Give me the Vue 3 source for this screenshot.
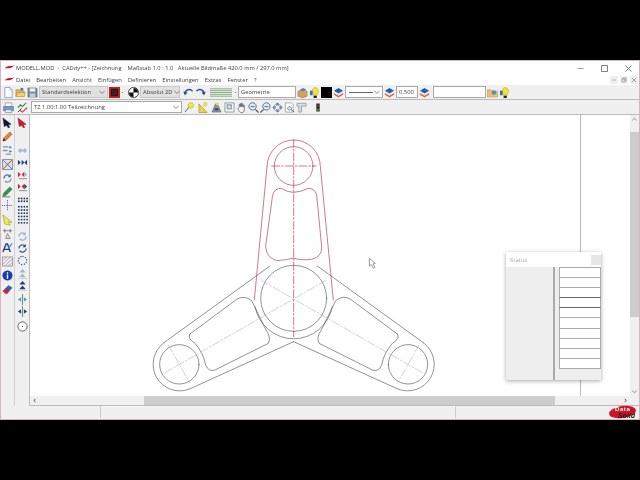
<script setup>
import { h } from 'vue'

const N = 'none'
const layer = [['M6 1 11 4 6 7 1 4z', '#1f5fb4', N, 0], ['M1 6.5 6 9.5 11 6.5V8.5L6 11.5 1 8.5z', '#d9683a', N, 0]]
const dots = (rows) => rows.flatMap(([y, c]) => [2, 5, 8, 11].map((x) => [`M${x - 1} ${y}a1 1 0 1 0 2 0a1 1 0 1 0 -2 0`, c, N, 0]))
const icons = {
  file: [['M2 .5h5.5L10 3v8.5H2z', '#fff', '#6f8fb5', .8], ['M7.5 .5V3H10', '#dce6f2', '#6f8fb5', .6]],
  open: [['M1 3h4l1 1.5h4V10H1z', '#e7b34a', '#a87c28', .6], ['M6 1h3v3L6 4z', '#3a78c8', N, 0], ['M3 6h8.5L10 10.5H1z', '#f3cf74', '#a87c28', .5]],
  save: [['M1 1h9l1 1v9H1z', '#7d8a99', '#56616e', .6], ['M3 1.5h6v3.5H3z', '#eef2f6', N, 0], ['M3 7h6v4H3z', '#c7ced6', N, 0]],
  redbox: [['M0 0h12v12H0z', '#c9201f', N, 0], ['M2.5 2.5h7v7h-7z', '#3a2020', '#111', 1]],
  ball: [['M6 .5a5.5 5.5 0 1 0 .01 0z', '#fff', '#333', 1], ['M6 1a5 5 0 0 1 5 5H6zM6 6v5a5 5 0 0 1-5-5z', '#111', N, 0]],
  undo: [['M2 8C2 3 7 1 10.500 4.500', N, '#24508f', 1.5], ['M.3 5 2 9 5 6', '#24508f', N, 0]],
  redo: [['M10 8C10 3 5 1 1.500 4.500', N, '#24508f', 1.5], ['M11.700 5 10 9 7 6', '#24508f', N, 0]],
  lines: [['M0 2h24M0 4h24M0 6h24M0 8h24M0 10h24', N, '#5f9a58', .8]],
  boxes: [['M1 5l5-3 5 3v5l-5 2-5-2z', '#d9a05a', '#8c5f2c', .5], ['M3 3l4-2 3 2-4 2z', '#4a86c8', N, 0]],
  bulb: [['M6.500 .5a4 4 0 0 1 2.500 7v1.500H5V7.500A4 4 0 0 1 6.500 .5z', '#f2e52e', '#a89c10', .5], ['M5 9.500h3.500V12H5z', '#222', N, 0], ['M1 4h3v5H1z', '#2f78a8', N, 0]],
  folderp: [['M.5 3h4l1 1.500h6V11H.5z', '#eec06e', '#b38a3e', .5], ['M5 6a2.500 2.500 0 1 0 5 0a2.500 2.500 0 1 0-5 0z', '#4d94c8', N, 0]],
  layer,
  printer: [['M2.500 1h7v4h-7z', '#fff', '#667', .6], ['M.5 5h11v4.500H.5z', '#6f9fd0', '#3e6a98', .6], ['M2.500 8.500h7v3h-7z', '#eef', '#667', .6]],
  tick: [['M1 11 5 7', N, '#333', 1], ['M1 6 4 3 6 5 10 1', N, '#2c8a3a', 1.200], ['M3 9l3 2 5-5', N, '#c83a3a', 1.200]],
  ywand: [['M1 11 6 5', N, '#555', 1], ['M7.500 .8a3 3 0 1 1-.01 0z', '#f2ea3a', '#9a9420', .5]],
  ytri: [['M1 11.500V2l9 9.500z', '#f0da4a', '#9a8a20', .7], ['M3.200 9.500V6.500l3 3z', '#fff', '#9a8a20', .4], ['M8 .5a2 2 0 1 1-.01 0z', '#f2ea3a', '#a09a20', .4]],
  tool: [['M1 11 5 2 8 4 11 11z', '#8a96a4', '#4e5864', .6], ['M4 7h4v2H4z', '#2f3a46', N, 0], ['M7 .5a1.700 1.700 0 1 1-.01 0z', '#e8e040', N, 0]],
  zoombox: [['M1 1h10v10H1z', '#eef1f4', '#7b8794', .8], ['M3.500 3h4.500v4.500H3.500z', '#d4dde6', '#55616e', .7]],
  hand: [['M3.500 6V2.500h1V5h.5V1.500h1V5h.5V2h1v3.500h.5V3.500h1V9c0 1.500-1 2.500-2.500 2.500H6C4.500 11.500 3 10 2 7.500z', '#f7f7f7', '#3a4654', .7]],
  zin: [['M5 .8a4 4 0 1 1-.01 0z', '#dfe7ef', '#4a6a8c', 1], ['M8 8l3.500 3.500', N, '#4a5a6a', 1.400], ['M3 5h4', N, '#2d68a8', 1]],
  zout: [['M7 .8a4 4 0 1 0 .01 0z', '#dfe7ef', '#4a6a8c', 1], ['M4 8 .5 11.500', N, '#4a5a6a', 1.400], ['M5 5h4', N, '#2d68a8', 1]],
  zall: [['M6 .5 9 3H3zM6 11.500 3 9h6zM.5 6 3 3v6zM11.500 6 9 9V3z', '#5f7f9f', N, 0], ['M6 3.500a2.500 2.500 0 1 1-.01 0z', '#eef', '#4a6a8c', .7]],
  zpage: [['M1.500 1h6.500L10 3v8H1.500z', '#fff', '#7b8794', .7], ['M6 5a2 2 0 1 1-.01 0z', '#dfe7ef', '#4a6a8c', .8], ['M7.500 8 11 11', N, '#4a5a6a', 1]],
  ruler: [['M1 1.500h10v3H6v6.500H3V4.500H1z', '#d8dde2', '#7b8794', .7]],
  traffic: [['M3.500 0h5v12h-5z', '#2a2a2a', N, 0], ['M6 2a1.300 1.300 0 1 1-.01 0z', '#b3271f', N, 0], ['M6 8a1.300 1.300 0 1 1-.01 0z', '#3fc23a', N, 0]],
  cblack: [['M1 1 10 8 7 8.500 8.500 11.500 6.500 11.500 5 9 2.500 10.500z', '#111827', '#0f2a5c', .5]],
  cred: [['M1 1 10 8 7 8.500 8.500 11.500 6.500 11.500 5 9 2.500 10.500z', '#c81e28', '#7a1a28', .5]],
  pencil: [['M1 11 2 7.500 8.500 1 11 3.500 4.500 10z', '#e8842c', '#8f4a14', .6], ['M1 11 2 8 4 10z', '#222', N, 0]],
  ends: [['M1 2h6M1 6h5M4 10h6', N, '#8a949e', 1.400], ['M8 1l3 1.500-3 1.500z', '#3b78c0', N, 0], ['M8 5.500l3 1.500-3 1.500z', '#3b78c0', N, 0]],
  cross: [['M.5 .5h11v11H.5z', '#dbe4ee', '#5e7690', .8], ['M1 11 11 1', N, '#d9762a', 1.400], ['M1 1l10 10', N, '#3b78c0', 1]],
  spin: [['M2 6a4 4 0 0 1 7-2.500', N, '#4b6f9c', 1.400], ['M10 6a4 4 0 0 1-7 2.500', N, '#7f97b5', 1.400], ['M9.500 1v3.500H6z', '#4b6f9c', N, 0]],
  gpen: [['M1 11 2 7.500 8.500 1 11 3.500 4.500 10z', '#2c9a4a', '#17652e', .6], ['M0 11.800h9', N, '#333', .7]],
  dotcross: [['M6 0v12M0 6h12', N, '#2a4fb8', 1, '1 1']],
  yarrow: [['M1 1 11 9 7 9 9 12 3 11z', '#ecec4e', '#8a8a20', .6]],
  dim: [['M1 3h10M3 1v4M9 1v4', N, '#555', .7], ['M4 11.500 6 6 9 11.500z', '#ddd', '#555', .6]],
  apen: [['M1 11 4.500 2h1.500L9 11M2.500 8h5', N, '#1d3b80', 1.500], ['M7 7 11 1.500', N, '#3f9fd0', 1.600]],
  hatch: [['M.5 1h11v10H.5z', '#eee', '#777', .7], ['M1 5 5 1M1 9l8-8M3 11l8-8M7 11l4-4', N, '#8e7fa0', .7]],
  info: [['M6 .5a5.500 5.500 0 1 1-.01 0z', '#1539b8', N, 0], ['M6 2.500v1.500M6 5v4.500', N, '#fff', 1.500]],
  eraser: [['M1 8 7 1.500 11 4 5 11z', '#2c62b8', '#333', .4], ['M1 8 4 4.800 8 7.500 5 11z', '#d6212f', N, 0]],
  pale: [['M1 6 4 3v2h4V3l3 3-3 3V7H4v2z', '#9fb6d2', N, 0]],
  dark: [['M1 3l3 3-3 3zM5 3l3 3-3 3z', '#1f4278', N, 0], ['M11 3 8 6l3 3z', '#1f4278', N, 0]],
  redblue: [['M1 3 4 6 1 9zM5 6l3-3v6z', '#cf2530', N, 0], ['M8 3l3 3-3 3z', '#a3b7d0', N, 0], ['M2 10.500h9', N, '#999', 1.200]],
  reddark: [['M1 3 4 6 1 9zM5 6l3-3v6z', '#cf2530', N, 0], ['M8 3l3 3-3 3z', '#1f4278', N, 0], ['M2 10.500h9', N, '#999', 1.200]],
  d2: dots([[6, '#2a3a55'], [9, '#2a3a55']]),
  d4: dots([1.5, 5, 8.5, 12, 15.5, 19].map((y) => [y, '#243c6e'])),
  spinp: [['M2 6a4 4 0 0 1 7-2.500M10 6a4 4 0 0 1-7 2.500', N, '#98b0cc', 1.500], ['M9.500 1v3.500H6z', '#98b0cc', N, 0]],
  spind: [['M2 6a4 4 0 0 1 7-2.500M10 6a4 4 0 0 1-7 2.500', N, '#3c6494', 1.500], ['M9.500 1v3.500H6z', '#1f4278', N, 0]],
  ring: [['M6 1.500a4.500 4.500 0 1 1-.01 0z', N, '#3a5a8a', 1.400, '1.300 1.500']],
  upp: [['M6 1 9.500 5H2.500zM6 6 9.500 10H2.500z', '#9fb6d2', N, 0], ['M1 11.500h10', N, '#ccc', .8]],
  upd: [['M6 1 9.500 5H2.500zM6 6 9.500 10H2.500z', '#1f4278', N, 0], ['M1 11.500h10', N, '#ccc', .8]],
  mirp: [['M6 0v12', N, '#3a9a4a', 1], ['M1 6 4.500 3.500v5zM11 6 7.500 3.500v5z', '#6d92bb', N, 0]],
  mird: [['M6 0v12', N, '#3a9a4a', 1], ['M1 6 4.500 3.500v5zM11 6 7.500 3.500v5z', '#1f4278', N, 0]],
  circle: [['M6 1a5 5 0 1 1-.01 0z', '#fff', '#444', .9], ['M5.500 5.500h1v1h-1z', '#444', N, 0]],
  chev: [['M2 4.500 6 8 10 4.500', N, '#555', 1]],
  drop: [['M3 5h6L6 8z', '#222', N, 0]],
  logo: [['M1 6c1-2.500 4-3.500 7-3 2 .2 3-.5 4-1.500-.5 2.500-2.500 3.500-4.500 3.800-2 .4-4 .2-6.500.7z', '#d4152a', N, 0]],
  wx: [['M2 2 10 10M10 2 2 10', N, '#555', 1]],
  wmin: [['M2 6h8', N, '#777', 1]],
  wmax: [['M2 2h8v8H2z', N, '#555', 1]],
  wres: [['M2 4h6v6H2zM4 4V2h6v6H8', N, '#666', 1]]
}

const Ico = (props) =>
  h('svg', { viewBox: props.box || '0 0 12 12', class: 'ic', style: props.w ? { width: props.w + 'px' } : null },
    icons[props.name].map(([d, fill, stroke, sw, dash]) => h('path', { d, fill, stroke, 'stroke-width': sw, 'stroke-dasharray': dash })))
Ico.props = ['name', 'box', 'w']

const menus = ['Datei', 'Bearbeiten', 'Ansicht', 'Einfügen', 'Definieren', 'Einstellungen', 'Extras', 'Fenster', '?']
const zoomIcons = ['zoombox', 'hand', 'zin', 'zout', 'zall', 'zpage', 'ruler']
const col1 = ['ends', 'cross', 'spin', 'gpen', 'dotcross', 'yarrow', 'dim', 'apen', 'hatch', 'info', 'eraser']
const col2 = [
  { n: 'pale' }, { n: 'dark' }, { n: 'redblue' }, { n: 'reddark' }, { n: 'd2' },
  { n: 'd4', c: 'tall', b: '0 0 12 21' },
  { n: 'spinp', c: 'sp4' }, { n: 'spind' }, { n: 'ring' },
  { n: 'upp', c: 'sp1' }, { n: 'upd' },
  { n: 'mirp', c: 'sp2' }, { n: 'mird' },
  { n: 'circle', c: 'sp3' }
]
const rows = ['#aaa', '#aaa', '#aaa', '#666', '#666', '#aaa', '#aaa', '#aaa', '#aaa', '#aaa']

const armPath = 'M72 638L390 408M72 638A80 80 0 0 0 151 776L461 635'
const pocket = 'M150 612L290 508Q312 494 335 512L378 600Q394 622 385 640L225 720Q205 726 197 705Q190 668 165 640Q140 625 150 612Z'
const sides = ['', 'translate(922 0) scale(-1 1)']
const topPocket = 'M398 195Q404 174 424 175Q445 188 461 187Q480 187 505 175Q525 175 530 195L545 350Q547 380 515 388Q480 392 461 384Q440 390 410 392Q378 382 377 350Z'
</script>

<template>
  <div class="screen">
    <div class="window">
      <header class="title">
        <Ico name="logo" class="logo" />
        <span class="title-text">MODELL.MOD &nbsp;-&nbsp; CADdy++ - [Zeichnung &nbsp;&nbsp; Maßstab 1.0 : 1.0 &nbsp; Aktuelle Bildmaße 420.0 mm / 297.0 mm]</span>
        <div class="wctl">
          <Ico name="wmin" /><Ico name="wmax" /><Ico name="wx" />
        </div>
      </header>
      <nav class="menu">
        <Ico name="logo" class="logo" />
        <span v-for="m in menus" :key="m" class="mi">{{ m }}</span>
        <div class="mdi">
          <span class="b"><Ico name="wmin" /></span><span class="b"><Ico name="wres" /></span><span class="b"><Ico name="wx" /></span>
        </div>
      </nav>
      <div class="bar bar1">
        <Ico name="file" /><Ico name="open" /><Ico name="save" />
        <div class="combo gray c-sel"><span>Standardselektion</span><Ico name="chev" /></div>
        <Ico name="redbox" /><Ico name="drop" class="drop" />
        <Ico name="ball" class="ml3" />
        <div class="combo gray c-abs"><span>Absolut 2D</span><Ico name="chev" /></div>
        <Ico name="undo" class="ml2" /><Ico name="redo" />
        <Ico name="lines" box="0 0 24 12" :w="24" class="ml2" /><Ico name="drop" class="drop" />
        <div class="combo c-geo"><span>Geometrie</span></div>
        <Ico name="boxes" /><Ico name="bulb" />
        <i class="swatch"></i>
        <Ico name="layer" />
        <div class="combo c-line"><i class="lineprev"></i><Ico name="chev" /></div>
        <Ico name="layer" />
        <div class="combo c-num"><span>0.500</span></div>
        <Ico name="layer" />
        <div class="combo c-empty"></div>
        <Ico name="folderp" /><Ico name="bulb" />
      </div>
      <div class="bar bar2">
        <Ico name="printer" /><Ico name="tick" class="ml2" />
        <div class="combo c-tz"><span>TZ 1.00:1.00 Teilzeichnung</span><Ico name="chev" /></div>
        <Ico name="ywand" class="ml1" /><Ico name="ytri" class="ml2" /><Ico name="tool" class="ml1" />
        <Ico v-for="(z, i) in zoomIcons" :key="z" :name="z" :class="{ ml1: i === 0 }" />
        <Ico name="traffic" class="ml5" />
      </div>
      <div class="main">
        <aside class="tools t1">
          <Ico name="cblack" />
          <Ico name="pencil" />
          <Ico v-for="c in col1" :key="c" :name="c" />
        </aside>
        <aside class="tools t2">
          <Ico name="cred" />
          <div class="gap"></div>
          <Ico v-for="c in col2" :key="c.n" :name="c.n" :box="c.b" :class="c.c" />
        </aside>
        <div class="work">
          <div class="work-row">
            <div class="canvas">
              <svg class="draw" viewBox="-330 -45 1800 840">
                <g fill="none" stroke-width="2" stroke-linecap="round">
                  <g stroke="#b23a4c">
                    <path d="M381 110A80 80 0 0 1 541 110L580 510M381 110L343 510" />
                    <circle cx="461" cy="108" r="58" />
                    <path :d="topPocket" />
                    <path d="M461 28V620M395 108H528" stroke-dasharray="24 6 5 6" />
                  </g>
                  <g stroke="#555c66">
                    <circle cx="461" cy="505" r="99" />
                    <path d="M345 530A118 118 0 0 0 577 530" />
                    <g v-for="s in sides" :key="s" :transform="s">
                      <path :d="armPath" />
                      <circle cx="118" cy="703" r="59" />
                      <path :d="pocket" />
                    </g>
                  </g>
                  <g stroke="#a3a3bd" stroke-width="1.500" stroke-dasharray="24 6 5 6">
                    <path d="M75 728L560 450M847 728L362 450M85 645L150 760M837 645L772 760" />
                  </g>
                </g>
                <path d="M688 385V408L694 404L700 415L705 412L699 402L706 400Z" fill="#fff" stroke="#667" stroke-width="2" />
              </svg>
              <section class="status">
                <div class="st-head"><span>Status</span><i></i></div>
                <div class="st-body">
                  <div class="st-left"></div>
                  <div class="st-right">
                    <div v-for="(c, i) in rows" :key="i" class="st-row" :style="{ borderTopColor: c }"></div>
                  </div>
                </div>
              </section>
            </div>
            <div class="vs">
              <Ico name="chev" class="arrow flip" />
              <div class="vs-track"><div class="vs-thumb"></div></div>
              <Ico name="chev" class="arrow" />
            </div>
          </div>
          <div class="hs">
            <span class="ha">‹</span>
            <div class="hs-track"><div class="hs-thumb"></div></div>
            <span class="ha">›</span>
            <div class="corner"></div>
          </div>
        </div>
      </div>
      <footer class="statusbar">
        <div class="cell c1"></div>
        <div class="cell c2"></div>
        <div class="brand"><b>Data</b><em>Solid</em></div>
      </footer>
    </div>
  </div>
</template>

<style>
html, body { margin: 0; background: #000; }
</style>

<style scoped>
.screen {
  width: 640px;
  height: 480px;
  box-sizing: border-box;
  padding: 60px 0;
  background: #000;
  overflow: hidden;
  font-family: "Open Sans", "Liberation Sans", sans-serif;
  font-size: 6px;
  color: #3c3c3c;
}
.window {
  height: 360px;
  box-sizing: border-box;
  border: 1px solid #d8b4bc;
  background: #fff;
  display: flex;
  flex-direction: column;
  filter: blur(.3px);
}
.ic { width: 11px; height: 11px; flex: none; display: block; overflow: visible; }
.logo { width: 10px; }
.title { height: 14px; display: flex; align-items: center; padding-left: 3px; gap: 2px; flex: none; }
.title-text { white-space: nowrap; font-size: 5.77px; }
.wctl { margin-left: auto; display: flex; align-items: center; gap: 15px; margin-right: 6px; }
.wctl .ic { width: 9px; height: 9px; }
.menu { height: 10px; display: flex; align-items: center; padding-left: 3px; flex: none; position: relative; }
.mi { margin-left: 2px; margin-right: 4.100px; white-space: nowrap; font-size: 5.800px; }
.mdi { margin-left: auto; display: flex; gap: 2px; margin-right: 1px; }
.mdi .b { width: 8px; height: 8px; background: #eee; display: flex; align-items: center; justify-content: center; }
.mdi .ic { width: 6px; height: 6px; }
.bar { display: flex; align-items: center; background: #f0f0f0; flex: none; border-bottom: 1px solid #bbb; box-sizing: border-box; gap: 1px; padding-left: 2px; }
.bar1 { height: 15px; }
.bar2 { height: 15px; }
.combo { height: 12px; box-sizing: border-box; border: 1px solid #aaa; background: #fff; display: flex; align-items: center; padding: 0 1px 0 2px; flex: none; font-size: 5.800px; white-space: nowrap; }
.combo .ic { width: 8px; height: 8px; margin-left: auto; }
.gray { background: #e1e1e1; border-color: #c8c8c8; }
.c-sel { width: 69px; }
.c-abs { width: 40px; }
.c-geo { width: 58px; }
.c-line { width: 38px; }
.c-num { width: 22px; }
.c-empty { width: 53px; margin-left: 2px; }
.c-tz { width: 151px; margin-left: 2px; }
.lineprev { width: 24px; height: 1px; background: #666; margin-left: 1px; }
.swatch { width: 11px; height: 11px; background: #000; flex: none; }
.drop { width: 3px; }
.ml1 { margin-left: 1px; }
.ml2 { margin-left: 2px; }
.ml3 { margin-left: 3px; }
.ml5 { margin-left: 6px; width: 8px; }
.main { flex: 1; min-height: 0; display: flex; }
.tools { display: flex; flex-direction: column; align-items: center; gap: 2.900px; background: #f0f0f0; padding-top: 2px; box-sizing: border-box; flex: none; }
.t1 { width: 14px; border-right: 1px solid #d0d0d0; }
.t2 { width: 15px; gap: 1px; border-right: 1px solid #bbb; }
.gap { height: 14.500px; flex: none; }
.tall { height: 20px; margin-top: .5px; }
.sp1 { margin-top: 1px; }
.sp2 { margin-top: 2px; }
.sp3 { margin-top: 3px; }
.sp4 { margin-top: 4.500px; }
.work { flex: 1; min-width: 0; display: flex; flex-direction: column; }
.work-row { flex: 1; min-height: 0; display: flex; }
.canvas { flex: 1; min-width: 0; position: relative; background: #fff; overflow: hidden; }
.canvas::after { content: ""; position: absolute; left: 550px; top: 0; bottom: 0; width: 1px; background: #b8b8b8; z-index: 0; }
.draw { display: block; width: 600px; height: 280px; }
.vs { width: 9px; background: #f0f0f0; display: flex; flex-direction: column; align-items: center; flex: none; }
.arrow { width: 7px; height: 9px; flex: none; }
.flip { transform: scaleY(-1); }
.vs-track { flex: 1; width: 100%; padding-top: 8px; box-sizing: border-box; }
.vs-thumb { height: 185px; background: #cdcdcd; }
.hs { height: 9px; flex: none; display: flex; align-items: center; background: #f0f0f0; border-bottom: 1px solid #bbb; }
.ha { width: 9px; text-align: center; font-size: 8px; line-height: 8px; color: #333; flex: none; font-family: "DejaVu Sans", sans-serif; }
.hs-track { flex: 1; height: 100%; padding-left: 105px; box-sizing: border-box; }
.hs-thumb { width: 411px; height: 100%; background: #cdcdcd; }
.corner { width: 9px; flex: none; }
.status { position: absolute; left: 476px; top: 137px; width: 95px; height: 128px; background: #eee; z-index: 1; box-shadow: 0 1px 4px rgba(0,0,0,.35); display: flex; flex-direction: column; }
.st-head { height: 15px; background: #fff; display: flex; align-items: center; justify-content: space-between; padding: 0 0 0 4px; color: #aaa; flex: none; }
.st-head i { width: 10px; height: 10px; background: #e6e6e6; }
.st-body { flex: 1; display: flex; }
.st-left { width: 47px; border-right: 2px solid #aaa; flex: none; }
.st-right { flex: 1; padding-left: 4px; display: flex; flex-direction: column; }
.st-row { height: 10.100px; box-sizing: border-box; background: #fff; border: 1px solid #aaa; border-bottom: 0; flex: none; }
.st-row:last-child { height: 11px; border-bottom: 1px solid #aaa; }
.statusbar { height: 13px; flex: none; background: #f0f0f0; display: flex; gap: 1px; position: relative; }
.cell { height: 12px; border-right: 1px solid #ccc; box-sizing: border-box; }
.c1 { width: 100px; }
.c2 { width: 354px; border-top: 1px solid #f8f8f8; }
.brand { margin-left: auto; width: 30px; height: 13px; position: relative; font-family: "Liberation Sans", sans-serif; font-size: 6px; line-height: 6px; }
.brand::before { content: ""; position: absolute; left: 0; top: 0; width: 27px; height: 12px; background: #cf1226; border-radius: 50%; transform: rotate(-8deg); }
.brand b { position: absolute; left: 6px; top: 0; color: #fff; letter-spacing: .6px; }
.brand em { position: absolute; left: 9px; top: 6.500px; font-weight: bold; font-size: 6.500px; letter-spacing: .3px; color: #111; }
</style>
